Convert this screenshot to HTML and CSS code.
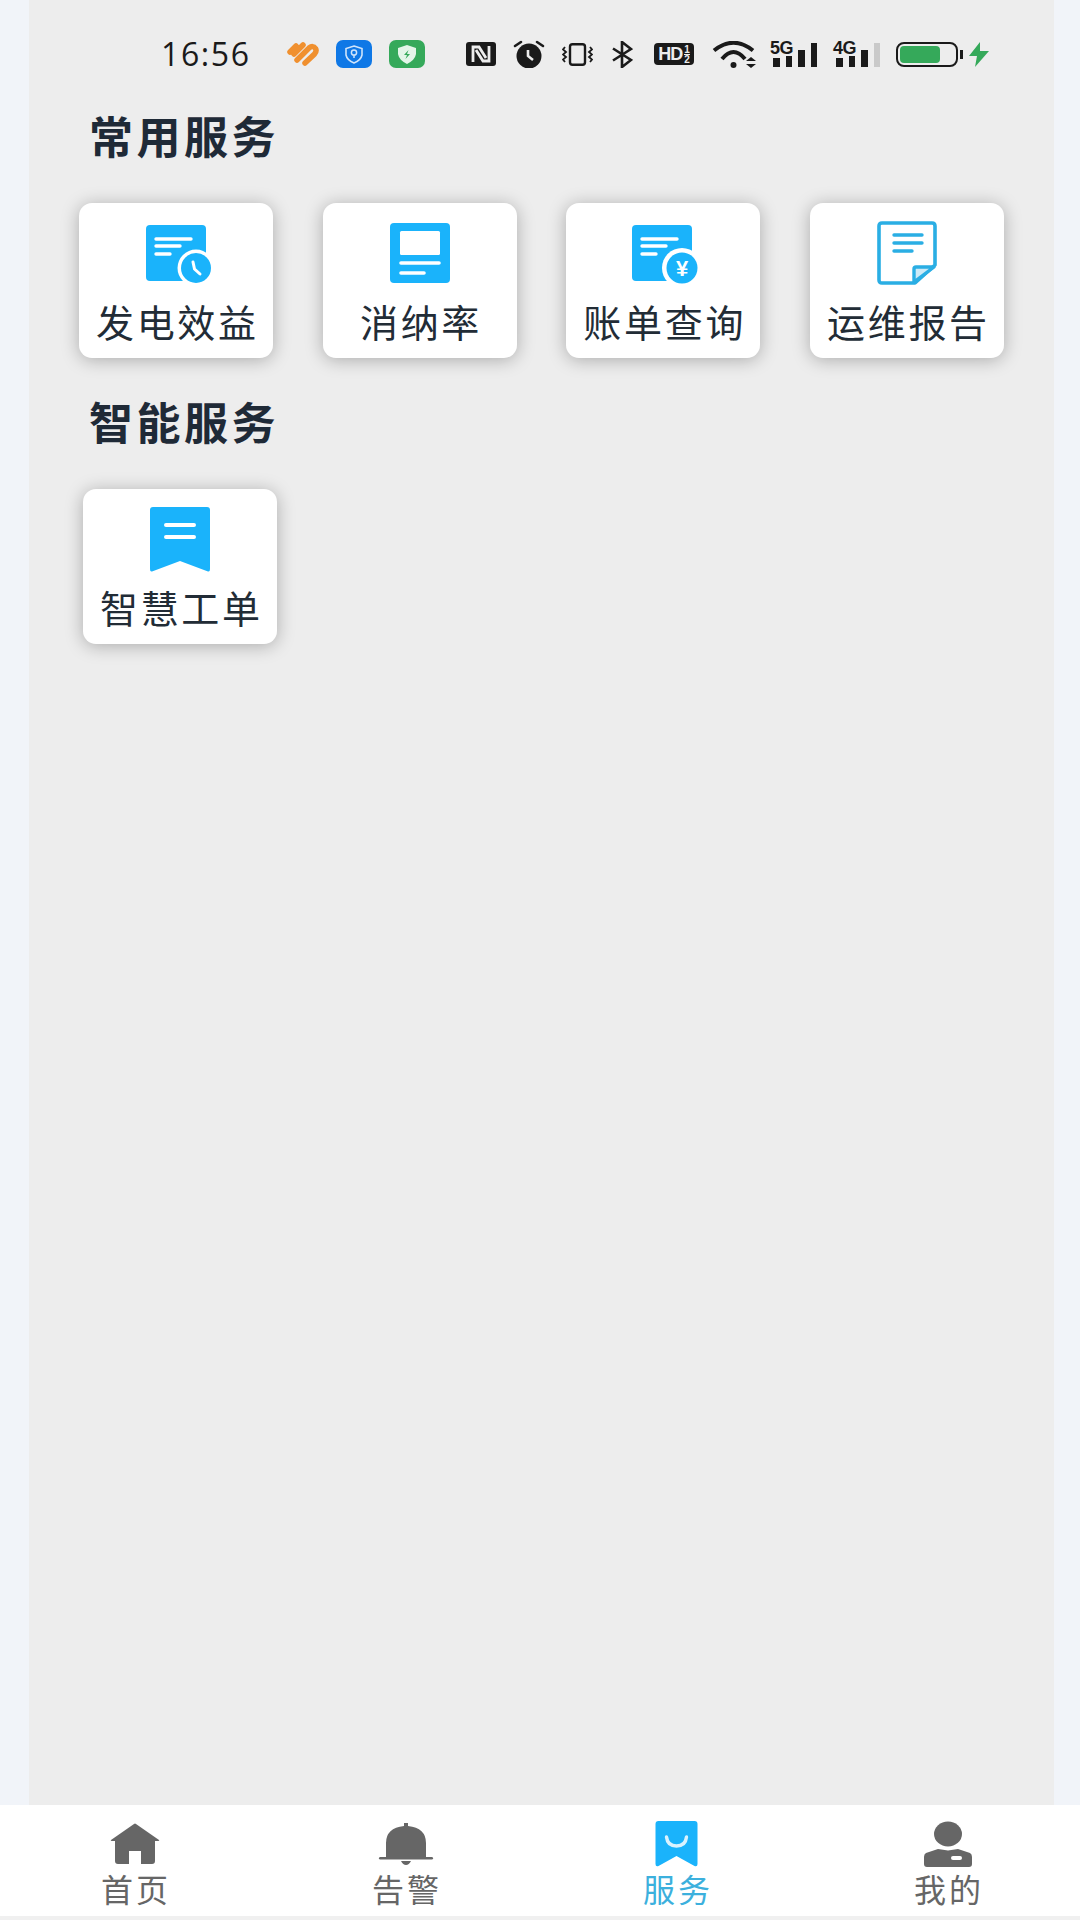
FILE: index.html
```html
<!DOCTYPE html>
<html lang="zh-CN">
<head>
    <meta charset="UTF-8">
    <meta name="viewport" content="width=device-width, initial-scale=1.0">
    <title>服务</title>
    <link rel="stylesheet" href="styles.css">
</head>
<body>
    <div class="panel">
        <div class="status-bar">
            <span class="time">16:56</span>
            <div class="app-icons">
                <svg width="32" height="24" viewBox="0 0 32 24"><path d="M3 10 L9 4 M10 18 L22 6 Q26 3 28.500 6.500 Q30 9 27.500 12 L18 21 M16 3 L7 12" fill="none" stroke="#f0902f" stroke-width="5.500" stroke-linecap="round"/></svg>
                <svg width="36" height="28" viewBox="0 0 36 28"><rect width="36" height="28" rx="7" fill="#0f78e6"/><path d="M18 6 L26 8.500 V15 Q25 20 18 23 Q11 20 10 15 V8.500 Z" fill="none" stroke="#cfe4fb" stroke-width="1.600"/><circle cx="18" cy="12.500" r="2.600" fill="none" stroke="#cfe4fb" stroke-width="1.500"/><path d="M18 15 V18" stroke="#cfe4fb" stroke-width="1.500"/></svg>
                <svg width="36" height="28" viewBox="0 0 36 28"><rect width="36" height="28" rx="7" fill="#35a95a"/><path d="M18 5 L27 8 V14 Q26 20 18 24 Q10 20 9 14 V8 Z" fill="#e3f5e8"/><path d="M19.500 10 L15 15 H18 L16.500 19 L21 14 H18 Z" fill="#35a95a"/></svg>
            </div>
            <div class="sys-icons">
                <svg width="30" height="24" viewBox="0 0 30 24"><rect width="30" height="24" rx="3" fill="#1a1a1a"/><path d="M7 20 V5 H13 L20 16 M23 4 V19 H17 L10 8" fill="none" stroke="#ededed" stroke-width="2.800"/></svg>
                <svg width="32" height="28" viewBox="0 0 32 28"><circle cx="16" cy="16" r="12.500" fill="#1a1a1a"/><path d="M2 6 L8 2 M30 6 L24 2" stroke="#1a1a1a" stroke-width="2.600" stroke-linecap="round"/><path d="M15 10 V16 L20 20" fill="none" stroke="#ededed" stroke-width="2.600"/></svg>
                <svg width="31" height="23" viewBox="0 0 31 23"><rect x="8" y="1.200" width="15" height="20.600" rx="2.500" fill="none" stroke="#1a1a1a" stroke-width="2.400"/><path d="M3 4 L1 6.500 L4 9 L1 11.500 L4 14 L1 16.500 L3 19 M28 4 L30 6.500 L27 9 L30 11.500 L27 14 L30 16.500 L28 19" fill="none" stroke="#1a1a1a" stroke-width="1.800"/></svg>
                <svg class="bt" width="21" height="27" viewBox="0 0 21 27"><path d="M1 7.500 L19 19 L10 26 V1 L19 8 L1 19.500" fill="none" stroke="#1a1a1a" stroke-width="2.600"/></svg>
                <div class="hd"><span class="hd-text">HD</span><span class="hd-sub"><i>1</i><i>2</i></span></div>
                <svg class="wifi" width="45" height="27" viewBox="0 0 45 27"><path d="M2 9.500 Q21.500 -6 41 9.500" fill="none" stroke="#1a1a1a" stroke-width="4"/><path d="M10 18 Q21.500 4 33 18" fill="none" stroke="#1a1a1a" stroke-width="4"/><circle cx="21.500" cy="24" r="3" fill="#1a1a1a"/><path d="M34 20 L39 16 L44 20 Z M34 23 H44 L39 27 Z" fill="#1a1a1a"/></svg>
                <div class="signal">
                    <span class="net">5G</span>
                    <div class="bars">
                        <i class="bar-a"></i><i class="bar-b"></i><i class="bar-c"></i><i class="bar-d"></i>
                    </div>
                </div>
                <div class="signal">
                    <span class="net">4G</span>
                    <div class="bars">
                        <i class="bar-a"></i><i class="bar-b"></i><i class="bar-c"></i><i class="bar-d off"></i>
                    </div>
                </div>
                <div class="battery"><div class="battery-level"></div></div>
                <svg class="bolt" width="20" height="25" viewBox="0 0 20 25"><path d="M11 0 L0 14 H8 L6 25 L20 9 H11 Z" fill="#35a95a"/></svg>
            </div>
        </div>

        <h2 class="section-title first">常用服务</h2>
        <div class="card-row">
            <div class="card">
                <svg class="card-icon shift-a" width="66" height="64" viewBox="0 0 66 64"><rect x="0" y="4" width="60" height="56" rx="4" fill="#1ab3fb"/><path d="M10 18 H45 M10 25 H34 M10 33 H24" stroke="#fff" stroke-width="3.400" stroke-linecap="round"/><circle cx="50" cy="47" r="18.500" fill="#fff"/><circle cx="50" cy="47" r="15" fill="#1ab3fb"/><path d="M47 41 L48.500 48 L54 53" fill="none" stroke="#fff" stroke-width="3" stroke-linecap="round"/></svg>
                <span class="card-label">发电效益</span>
            </div>
            <div class="card">
                <svg class="card-icon" width="60" height="64" viewBox="0 0 60 64"><rect y="2" width="60" height="60" rx="4" fill="#1ab3fb"/><rect x="10" y="10" width="40" height="24" rx="1.500" fill="#fff"/><path d="M11 42 H49 M11 52 H34" stroke="#fff" stroke-width="3.600" stroke-linecap="round"/></svg>
                <span class="card-label">消纳率</span>
            </div>
            <div class="card">
                <svg class="card-icon shift-a" width="68" height="64" viewBox="0 0 68 64"><rect x="0" y="4" width="60" height="56" rx="4" fill="#1ab3fb"/><path d="M10 18 H45 M10 25 H34 M10 33 H24" stroke="#fff" stroke-width="3.400" stroke-linecap="round"/><circle cx="50" cy="47" r="20" fill="#fff"/><circle cx="50" cy="47" r="15.500" fill="#1ab3fb"/><text class="yen" x="50" y="54.500">¥</text></svg>
                <span class="card-label">账单查询</span>
            </div>
            <div class="card">
                <svg class="card-icon" width="60" height="64" viewBox="0 0 60 64"><path d="M5 2 H55 Q58 2 58 5 V44 L38 62 H5 Q2 62 2 59 V5 Q2 2 5 2 Z" fill="#fff" stroke="#2aaee4" stroke-width="3.600" stroke-linejoin="round"/><path d="M17 14 H45 M17 22 H45 M17 30 H35" stroke="#2aaee4" stroke-width="3.400" stroke-linecap="round"/><path d="M37 61 V48 Q37 46 39 46 H57 Z" fill="#cdeaf7" stroke="#2aaee4" stroke-width="3.400" stroke-linejoin="round"/></svg>
                <span class="card-label">运维报告</span>
            </div>
        </div>

        <h2 class="section-title second">智能服务</h2>
        <div class="card-row solo">
            <div class="card">
                <svg class="card-icon" width="60" height="65" viewBox="0 0 60 65"><path d="M3 0 H57 Q60 0 60 3 V62 Q60 65 58 64.500 L30 54 L2 64.500 Q0 65 0 62 V3 Q0 0 3 0 Z" fill="#1ab3fb"/><path d="M16 18 H44 M16 30 H44" stroke="#fff" stroke-width="4" stroke-linecap="round"/></svg>
                <span class="card-label">智慧工单</span>
            </div>
        </div>
    </div>

    <div class="tab-bar">
        <div class="tab">
            <svg class="tab-icon" width="50" height="42" viewBox="0 0 50 42"><path d="M24 1 Q25 0 26 1 L49 17 Q50 18 48 18 H45 V38 Q45 41 42 41 H31 V28 H19 V41 H8 Q5 41 5 38 V18 H2 Q0 18 1 17 Z" fill="#666"/></svg>
            <span class="tab-label">首页</span>
        </div>
        <div class="tab">
            <svg class="tab-icon" width="56" height="44" viewBox="0 0 56 44"><path d="M8 35 V21 Q8 6 26 4 V1 H30 V4 Q48 6 48 21 V35 Z" fill="#666"/><rect x="1" y="35" width="54" height="2.500" rx="1.200" fill="#666"/><path d="M23 39 H33 Q31 43 28 43 Q25 43 23 39 Z" fill="#666"/></svg>
            <span class="tab-label">告警</span>
        </div>
        <div class="tab active">
            <svg class="tab-icon" width="43" height="46" viewBox="0 0 42 46"><path d="M3 0 H39 Q42 0 42 3 V43 Q42 46 39 45 L21 35 L3 45 Q0 46 0 43 V3 Q0 0 3 0 Z" fill="#1ab3fb"/><path d="M11 16 Q12 25 21 25 Q30 25 31 16" fill="none" stroke="#d9f2fe" stroke-width="3.400" stroke-linecap="round"/></svg>
            <span class="tab-label">服务</span>
        </div>
        <div class="tab">
            <svg class="tab-icon" width="50" height="46" viewBox="0 0 50 46"><ellipse cx="25" cy="13" rx="14" ry="12.500" fill="#666"/><path d="M15 28 L25 29.500 L35 28 L47 32 Q49 33 49 36 V43 Q49 46 46 46 H4 Q1 46 1 43 V36 Q1 33 3 32 Z" fill="#666"/><rect x="28" y="35" width="11" height="4" rx="2" fill="#fff"/></svg>
            <span class="tab-label">我的</span>
        </div>
    </div>
</body>
</html>
```

FILE: styles.css
```css
* {
    box-sizing: border-box;
}

body {
    margin: 0;
    height: 1920px;
    display: flex;
    flex-direction: column;
    background: #f1f4f9;
    font-family: "Noto Sans CJK SC", "Noto Sans", sans-serif;
    overflow: hidden;
}

.panel {
    flex: 1;
    margin: 0 26px 0 29px;
    background: #ededed;
}

/* status bar */
.status-bar {
    display: flex;
    align-items: center;
    height: 54px;
    margin-top: 27px;
    padding-left: 132px;
}

.time {
    width: 126px;
    margin-top: -2px;
    font-family: "Open Sans", sans-serif;
    font-size: 32px;
    letter-spacing: 1.6px;
    color: #1a1a1a;
}

.app-icons {
    display: flex;
    align-items: center;
    gap: 17px;
    width: 179px;
}

.sys-icons {
    display: flex;
    align-items: center;
    gap: 17px;
}

.bt {
    margin-left: 2px;
}

.hd {
    display: flex;
    align-items: center;
    justify-content: center;
    width: 40px;
    height: 22px;
    margin-left: 4px;
    border-radius: 4px;
    background: #1a1a1a;
    color: #ededed;
    font-family: "Liberation Sans", sans-serif;
    font-weight: 700;
}

.hd-text {
    font-size: 18px;
    letter-spacing: -1px;
}

.hd-sub {
    display: flex;
    flex-direction: column;
    font-size: 10px;
    line-height: 9px;
    margin-left: 2px;
}

.hd-sub i {
    font-style: normal;
}

.hd-sub i:first-child {
    border-bottom: 1px solid #ededed;
}

.wifi {
    margin-left: 1px;
}

.signal {
    position: relative;
    width: 47px;
    height: 26px;
    margin-left: -1px;
}

.wifi + .signal {
    margin-left: -4px;
}

.net {
    position: absolute;
    left: 0;
    top: -2px;
    font-family: "Liberation Sans", sans-serif;
    font-size: 18px;
    line-height: 18px;
    font-weight: 700;
    letter-spacing: -0.5px;
    color: #1a1a1a;
}

.bars {
    display: flex;
    align-items: flex-end;
    gap: 6px;
    height: 26px;
    padding-left: 3px;
}

.bars i {
    width: 6.5px;
    background: #1a1a1a;
}

.bar-a {
    height: 9px;
}

.bar-b {
    height: 11px;
}

.bar-c {
    height: 17px;
}

.bar-d {
    height: 24px;
}

.bars .off {
    background: #c9c9c9;
}

.battery {
    width: 62px;
    height: 25px;
    padding: 2px;
    margin-left: -1px;
    border: 2px solid #1a1a1a;
    border-radius: 8px;
    position: relative;
}

.battery::after {
    content: "";
    position: absolute;
    right: -7px;
    top: 6px;
    width: 3px;
    height: 9px;
    background: #1a1a1a;
}

.battery-level {
    width: 40px;
    height: 100%;
    background: #35a95a;
    border-radius: 4px;
}

.bolt {
    margin-left: -6px;
}

/* sections */
.section-title {
    margin: 0;
    padding-left: 60px;
    font-size: 44px;
    line-height: 50px;
    font-weight: 700;
    letter-spacing: 3.5px;
    color: #1f2a37;
}

.section-title.first {
    margin-top: 29px;
}

.section-title.second {
    margin-top: 38px;
    padding-left: 60px;
}

.card-row {
    display: flex;
    gap: 49.7px;
    padding-left: 50px;
    margin-top: 43px;
}

.card-row.solo {
    padding-left: 54px;
}

.card {
    width: 194px;
    height: 155px;
    display: flex;
    flex-direction: column;
    align-items: center;
    justify-content: space-between;
    padding: 18px 0 15px;
    background: #fff;
    border-radius: 13px;
    box-shadow: 0 2px 18px rgba(0, 0, 0, 0.28);
}

.card-icon {
    display: block;
}

.card-icon.shift-a {
    margin-left: 6px;
}

.card-label {
    font-size: 38px;
    line-height: 44px;
    letter-spacing: 2.7px;
    margin-right: -2.7px;
    color: #222c36;
}

.yen {
    font-family: "Liberation Sans", sans-serif;
    font-size: 22px;
    font-weight: 700;
    fill: #fff;
    text-anchor: middle;
}

/* bottom tabs */
.tab-bar {
    display: grid;
    grid-template-columns: repeat(4, 271px);
    height: 115px;
    border-bottom: 4px solid #f0f0f0;
    background: #fff;
}

.tab {
    display: flex;
    flex-direction: column;
    align-items: center;
    padding: 16px 2px 0 0;
}

.tab-icon {
    display: block;
    height: 46px;
}

.tab-label {
    margin-top: 1px;
    margin-right: -3px;
    font-size: 32px;
    line-height: 40px;
    letter-spacing: 3px;
    color: #666;
}

.tab.active .tab-label {
    color: #3cb0dd;
}
```
